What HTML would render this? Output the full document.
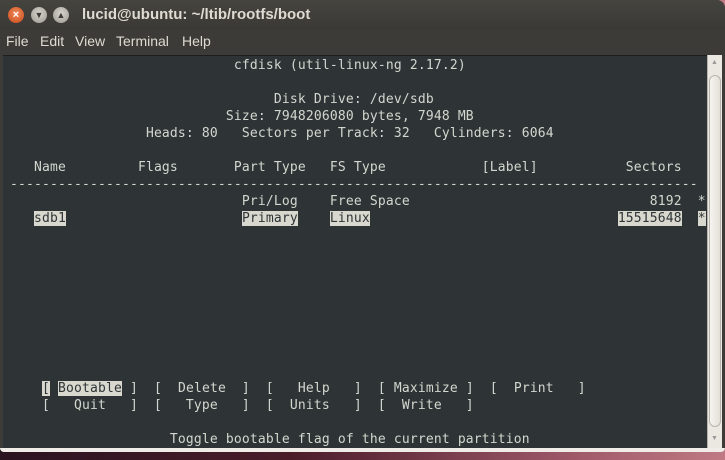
<!DOCTYPE html>
<html><head><meta charset="utf-8"><style>
*{margin:0;padding:0;box-sizing:border-box}
html,body{width:725px;height:460px;overflow:hidden}
body{background:linear-gradient(90deg,#2a1420,#4a1c2a 40%,#a05a6a 80%,#c07a84);position:relative;font-family:"Liberation Sans","DejaVu Sans",sans-serif}
.win{position:absolute;left:0;top:0;width:725px;height:452px;background:#3c3b37;border-radius:0 8px 4px 4px;overflow:hidden}
.title{position:absolute;left:0;top:0;width:725px;height:30px;background:linear-gradient(#45443f,#3a3935);border-radius:0 8px 0 0}
.title .t{position:absolute;left:82px;top:6px;color:#dfdbd2;font-weight:bold;font-size:15px}
.btn{position:absolute;top:7px;width:16px;height:16px;border-radius:50%;}
.menu{position:absolute;left:0;top:30px;height:24px;width:725px;color:#dfdbd2;font-size:14px}
.menu span{position:absolute;top:3px}
.term{position:absolute;left:3px;top:55px;width:704px;height:393px;background:#2e3436;border-top:1px solid #1e1e1e;overflow:hidden}
pre{position:absolute;left:7px;top:1px;font-family:"DejaVu Sans Mono",monospace;font-size:13px;letter-spacing:0.17px;line-height:17px;color:#d3d7cf}
.h{background:#d8d8ce;color:#2e3436}
.sb{position:absolute;left:707px;top:55px;width:15px;height:393px;background:#ebe8e2;border-left:1px solid #b8b4ad}
.thumb{position:absolute;left:1px;top:20px;width:12px;height:352px;border:1px solid #b8b4ad;border-radius:6px;background:linear-gradient(90deg,#f6f4f0,#e4e0d8)}
.bot{position:absolute;left:0;top:448px;width:725px;height:4px;background:#f0ede8}
</style></head><body>
<div class="win">
<div class="title">
<div class="btn" style="left:8px;background:radial-gradient(circle at 50% 40%,#f08a5a,#c84a1a);color:#fff;font-size:11px;text-align:center;line-height:16px;font-weight:bold">×</div>
<div class="btn" style="left:31px;background:radial-gradient(circle at 50% 40%,#d8d5cf,#9a978f);color:#3c3b37;font-size:9px;text-align:center;line-height:16px">▼</div>
<div class="btn" style="left:53px;background:radial-gradient(circle at 50% 40%,#d8d5cf,#9a978f);color:#3c3b37;font-size:9px;text-align:center;line-height:16px">▲</div>
<div class="t">lucid@ubuntu: ~/ltib/rootfs/boot</div>
</div>
<div class="menu"><span style="left:6px">File</span><span style="left:40px">Edit</span><span style="left:75px">View</span><span style="left:116px">Terminal</span><span style="left:182px">Help</span></div>
<div class="term"><pre>                            cfdisk (util-linux-ng 2.17.2)

                                 Disk Drive: /dev/sdb
                           Size: 7948206080 bytes, 7948 MB
                 Heads: 80   Sectors per Track: 32   Cylinders: 6064

   Name         Flags       Part Type   FS Type            [Label]           Sectors
--------------------------------------------------------------------------------------
                             Pri/Log    Free Space                              8192  *
   <span class="h">sdb1</span>                      <span class="h">Primary</span>    <span class="h">Linux</span>                               <span class="h">15515648</span>  <span class="h">*</span>









    <span class="h">[</span> <span class="h">Bootable</span> ]  [  Delete  ]  [   Help   ]  [ Maximize ]  [  Print   ]
    [   Quit   ]  [   Type   ]  [  Units   ]  [  Write   ]

                    Toggle bootable flag of the current partition</pre></div>
<div class="sb"><div style="position:absolute;top:4px;left:3px;font-size:7px;color:#999">▲</div><div class="thumb"></div><div style="position:absolute;top:380px;left:3px;font-size:7px;color:#999">▼</div></div>
<div class="bot"></div>
</div>
</body></html>
